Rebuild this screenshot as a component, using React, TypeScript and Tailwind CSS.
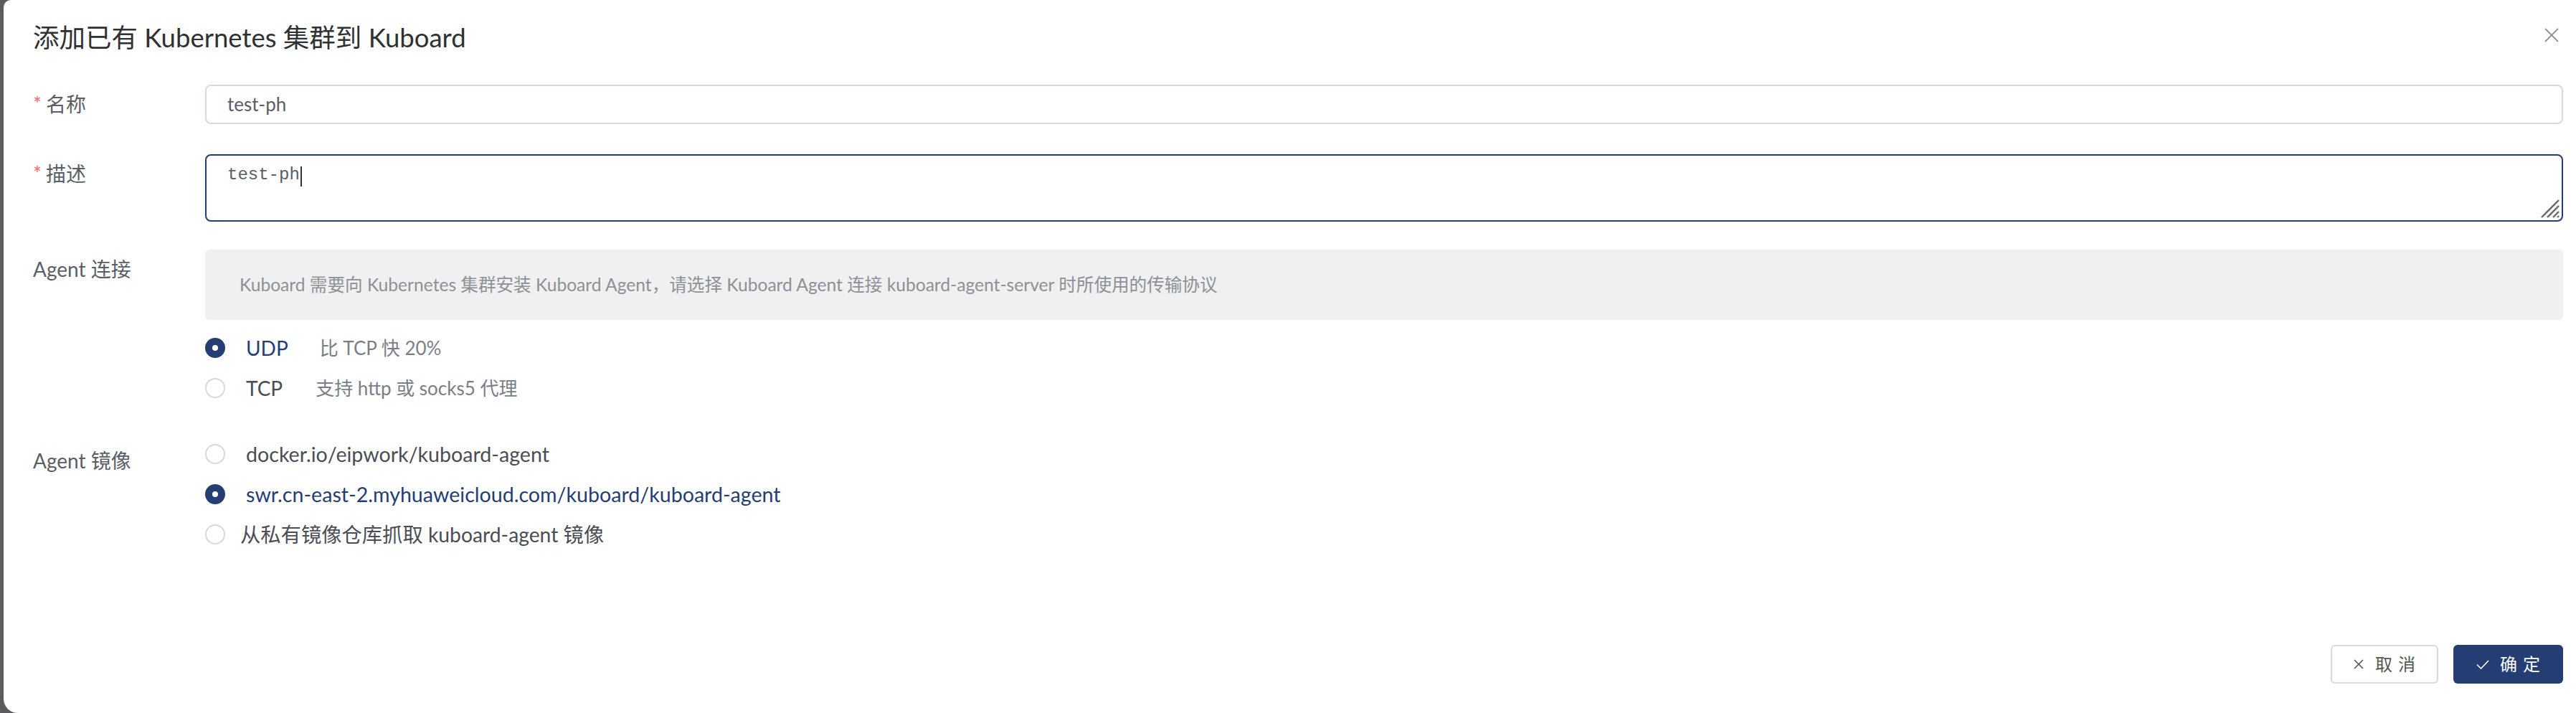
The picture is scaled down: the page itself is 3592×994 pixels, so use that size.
import React from "react";

const FONT = { fontFamily: '"Lato", "Noto Sans CJK SC", sans-serif' };

function Radio({ checked }: { checked?: boolean }) {
  return checked ? (
    <span className="w-[28px] h-[28px] rounded-full bg-[#243e74] flex items-center justify-center shrink-0">
      <span className="w-[8px] h-[8px] rounded-full bg-white" />
    </span>
  ) : (
    <span className="w-[28px] h-[28px] rounded-full border-2 border-[#d6d9e1] bg-white shrink-0" />
  );
}

function Label({ text, required, className = "" }: { text: string; required?: boolean; className?: string }) {
  return (
    <div className={`w-[240px] shrink-0 text-[28px] leading-[55px] text-[#5a5e66] ${className}`}>
      {required && <span className="text-[#f56c6c] mr-[6px]">*</span>}
      {text}
    </div>
  );
}

export default function App() {
  return (
    <div className="w-[3592px] h-[994px] bg-[#5a5c5f] flex overflow-hidden" style={FONT}>
      <div className="ml-[5px] flex-1 bg-white rounded-tl-[10px] rounded-bl-[20px] relative flex flex-col pl-[41px] pr-[18px]">
        <div className="pt-[29px]">
          <h1 className="text-[36.5px] leading-[46px] text-[#303133]">添加已有 Kubernetes 集群到 Kuboard</h1>
        </div>
        <button className="absolute top-[39px] right-[24px] w-[20px] h-[20px] text-[#8c8f96]">
          <svg viewBox="0 0 20 20" width="20" height="20" fill="none" stroke="currentColor" strokeWidth="1.8">
            <path d="M1 1 L19 19 M19 1 L1 19" />
          </svg>
        </button>

        {/* 名称 */}
        <div className="flex mt-[43px]">
          <Label text="名称" required />
          <div className="flex-1 h-[55px] border-2 border-[#d5d9e2] rounded-[8px] flex items-center px-[29px] text-[26px] text-[#5a5e66]">
            test-ph
          </div>
        </div>

        {/* 描述 */}
        <div className="flex mt-[42px]">
          <Label text="描述" required />
          <div className="flex-1 h-[94px] border-2 border-[#243e74] rounded-[8px] relative px-[29px] pt-[12px]">
            <span
              className="text-[24px] leading-[30px] text-[#5a5e66]"
              style={{ fontFamily: '"Liberation Mono", monospace' }}
            >
              test-ph
            </span>
            <span className="inline-block w-[2px] h-[28px] bg-[#333] align-middle ml-[1px]" />
            <svg className="absolute right-[2px] bottom-[2px]" width="28" height="28" viewBox="0 0 28 28" stroke="#666" strokeWidth="2.4" fill="none">
              <path d="M26 2 L2 26 M26 10 L10 26 M26 18 L18 26 M26 24 L24 26" />
            </svg>
          </div>
        </div>

        {/* Agent 连接 */}
        <div className="flex mt-[39px]">
          <Label text="Agent 连接" />
          <div className="flex-1 flex flex-col">
            <div className="h-[98px] bg-[#f0f0f0] rounded-[6px] flex items-center pl-[48px] text-[24.6px] text-[#8c9098]">
              Kuboard 需要向 Kubernetes 集群安装 Kuboard Agent，请选择 Kuboard Agent 连接 kuboard-agent-server 时所使用的传输协议
            </div>
            <div className="mt-[11px] flex flex-col">
              <div className="h-[56px] flex items-center">
                <Radio checked />
                <span className="ml-[29px] text-[28px] text-[#243e74]">UDP</span>
                <span className="ml-[44px] text-[26px] text-[#7a7e86]">比 TCP 快 20%</span>
              </div>
              <div className="h-[56px] flex items-center">
                <Radio />
                <span className="ml-[29px] text-[28px] text-[#4a4d54]">TCP</span>
                <span className="ml-[46px] text-[26px] text-[#7a7e86]">支持 http 或 socks5 代理</span>
              </div>
            </div>
          </div>
        </div>

        {/* Agent 镜像 */}
        <div className="flex mt-[36px]">
          <Label text="Agent 镜像" className="mt-[10px]" />
          <div className="flex-1 flex flex-col">
            <div className="h-[56px] flex items-center">
              <Radio />
              <span className="ml-[29px] text-[28.6px] text-[#4a4d54]">docker.io/eipwork/kuboard-agent</span>
            </div>
            <div className="h-[56px] flex items-center">
              <Radio checked />
              <span className="ml-[29px] text-[28.6px] text-[#243e74]">swr.cn-east-2.myhuaweicloud.com/kuboard/kuboard-agent</span>
            </div>
            <div className="h-[56px] flex items-center">
              <Radio />
              <span className="ml-[21px] text-[28.3px] text-[#4a4d54]">从私有镜像仓库抓取 kuboard-agent 镜像</span>
            </div>
          </div>
        </div>

        {/* footer */}
        <div className="mt-auto pb-[41px] flex justify-end gap-[21px]">
          <button className="w-[150px] h-[54px] border-2 border-[#d7dae2] rounded-[6px] bg-white flex items-center justify-center text-[24px] text-[#555]">
            <svg width="14" height="14" viewBox="0 0 14 14" stroke="#555" strokeWidth="1.6" fill="none">
              <path d="M1 1 L13 13 M13 1 L1 13" />
            </svg>
            <span className="ml-[16px] tracking-[8px] mr-[-8px]">取消</span>
          </button>
          <button className="w-[153px] h-[54px] rounded-[6px] bg-[#243e74] flex items-center justify-center text-[24px] text-white">
            <svg width="18" height="13" viewBox="0 0 18 13" stroke="#fff" strokeWidth="1.6" fill="none">
              <path d="M1 6.5 L6.5 12 L17 1" />
            </svg>
            <span className="ml-[15px] tracking-[8px] mr-[-8px]">确定</span>
          </button>
        </div>
      </div>
    </div>
  );
}
